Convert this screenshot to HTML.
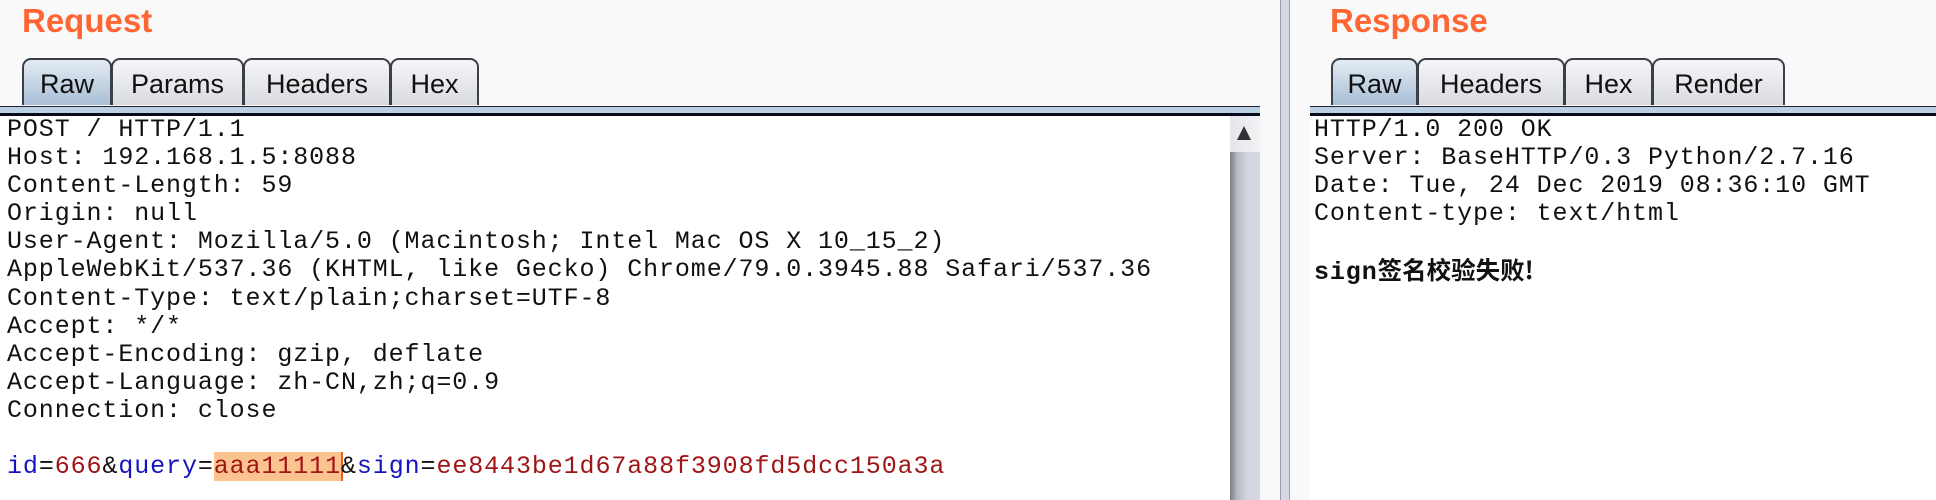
<!DOCTYPE html>
<html><head><meta charset="utf-8"><style>
body{margin:0;width:1936px;height:500px;background:#f9f9f9;position:relative;overflow:hidden;font-family:"Liberation Sans","Noto Sans CJK SC",sans-serif}
.title{position:absolute;top:2px;font-weight:bold;font-size:33px;color:#ff6633}
.tab{position:absolute;top:58px;height:47px;box-sizing:border-box;border:2px solid #3a3f4a;border-bottom:none;border-radius:9px 9px 0 0;background:linear-gradient(#f6f6f8,#d9dbe0);font-size:27px;color:#111;text-align:center;line-height:48px}
.tab.sel{background:linear-gradient(#e4ebf3,#a8bfd6)}
.band{position:absolute;top:106px;height:7px;background:#bcd0e3;border-top:1px solid #223}
.dark{position:absolute;top:113px;height:3px;background:#0a0a1e}
.pane{position:absolute;top:116px;bottom:0;background:#fff}
.txt{position:absolute;font-family:"Liberation Mono",monospace;font-size:25px;letter-spacing:0.9px;line-height:28.1px;white-space:pre;color:#111}
.b{color:#1515c0}.r{color:#a01515}
.hl{background:#fcc290;box-shadow:2px 0 0 #f06020}
</style></head><body>
<div class="title" style="left:22px">Request</div>
<div class="title" style="left:1330px">Response</div>

<div class="tab sel" style="left:22px;width:90px">Raw</div>
<div class="tab" style="left:111px;width:133px">Params</div>
<div class="tab" style="left:243px;width:148px">Headers</div>
<div class="tab" style="left:390px;width:89px">Hex</div>

<div class="tab sel" style="left:1331px;width:87px">Raw</div>
<div class="tab" style="left:1417px;width:148px">Headers</div>
<div class="tab" style="left:1564px;width:89px">Hex</div>
<div class="tab" style="left:1652px;width:133px">Render</div>

<div class="band" style="left:0;width:1260px"></div>
<div class="dark" style="left:0;width:1260px"></div>
<div class="band" style="left:1310px;width:626px"></div>
<div class="dark" style="left:1310px;width:626px"></div>

<div class="pane" style="left:0;width:1230px"></div>
<div class="pane" style="left:1310px;width:626px"></div>

<div style="position:absolute;left:1230px;top:116px;width:30px;bottom:0;background:linear-gradient(90deg,#7c7e86,#b9bbc3 25%,#d3d6de 60%,#d6d9e1)"></div>
<div style="position:absolute;left:1230px;top:116px;width:30px;height:36px;background:linear-gradient(90deg,#e4e6ea,#f2f3f5)"></div>
<div style="position:absolute;left:1237px;top:126px;width:0;height:0;border-left:7px solid transparent;border-right:7px solid transparent;border-bottom:14px solid #333"></div>
<div style="position:absolute;left:1260px;top:116px;width:20px;bottom:0;background:#f9f9f9"></div>
<div style="position:absolute;left:1280px;top:0;width:10px;bottom:0;background:#d5d8e0;border-left:1px solid #9a9cab;border-right:1px solid #9a9cab;box-sizing:border-box"></div>

<div class="txt" style="left:7px;top:116px">POST / HTTP/1.1
Host: 192.168.1.5:8088
Content-Length: 59
Origin: null
User-Agent: Mozilla/5.0 (Macintosh; Intel Mac OS X 10_15_2)
AppleWebKit/537.36 (KHTML, like Gecko) Chrome/79.0.3945.88 Safari/537.36
Content-Type: text/plain;charset=UTF-8
Accept: */*
Accept-Encoding: gzip, deflate
Accept-Language: zh-CN,zh;q=0.9
Connection: close

<span class="b">id</span>=<span class="r">666</span>&amp;<span class="b">query</span>=<span class="r hl">aaa11111</span>&amp;<span class="b">sign</span>=<span class="r">ee8443be1d67a88f3908fd5dcc150a3a</span></div>

<div class="txt" style="left:1314px;top:116px">HTTP/1.0 200 OK
Server: BaseHTTP/0.3 Python/2.7.16
Date: Tue, 24 Dec 2019 08:36:10 GMT
Content-type: text/html

<b>sign<span style="font-family:'Noto Sans CJK SC',sans-serif;font-size:24.5px;letter-spacing:0">签名校验失败!</span></b></div>
</body></html>
